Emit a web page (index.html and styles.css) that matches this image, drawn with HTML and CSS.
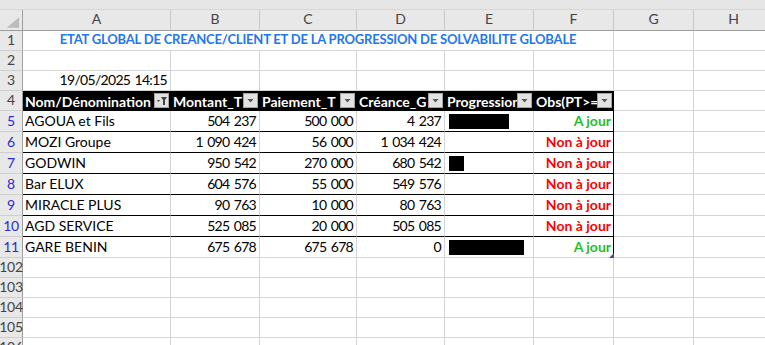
FILE: index.html
```html
<!DOCTYPE html>
<html lang="fr">
<head>
    <meta charset="UTF-8">
    <title>Etat global de créance</title>
    <link rel="stylesheet" href="styles.css">
</head>
<body>
    <div class="topbar"></div>

    <div class="sheet">
        <!-- en-têtes de colonnes -->
        <div class="corner">
            <svg width="23" height="21" viewBox="0 0 23 21"><polygon points="20,7 20,18 7,18" fill="#bcbcbc"/></svg>
        </div>
        <div class="ch">A</div>
        <div class="ch">B</div>
        <div class="ch">C</div>
        <div class="ch">D</div>
        <div class="ch">E</div>
        <div class="ch">F</div>
        <div class="ch">G</div>
        <div class="ch">H</div>

        <!-- ligne 1 : titre -->
        <div class="rh">1</div>
        <div class="c title">ETAT GLOBAL DE CREANCE/CLIENT ET DE LA PROGRESSION DE SOLVABILITE GLOBALE</div>
        <div class="c"></div>
        <div class="c"></div>

        <!-- ligne 2 -->
        <div class="rh">2</div>
        <div class="c"></div><div class="c"></div><div class="c"></div><div class="c"></div>
        <div class="c"></div><div class="c"></div><div class="c"></div><div class="c"></div>

        <!-- ligne 3 : date -->
        <div class="rh">3</div>
        <div class="c num">19/05/2025 14:15</div>
        <div class="c"></div><div class="c"></div><div class="c"></div>
        <div class="c"></div><div class="c"></div><div class="c"></div><div class="c"></div>

        <!-- ligne 4 : en-tête du tableau -->
        <div class="rh">4</div>
        <div class="c hd">
            <span class="label">Nom/Dénomination</span>
            <span class="filter">
                <svg width="13" height="13" viewBox="0 0 13 13">
                    <polygon points="2,6 5,6 3.5,8" fill="#444"/>
                    <polygon points="6,3 12,3 10,6 10,11 8,11 8,6" fill="#444"/>
                </svg>
            </span>
        </div>
        <div class="c hd">
            <span class="label">Montant_T</span>
            <span class="filter"><svg width="13" height="13" viewBox="0 0 13 13"><polygon points="3.5,5 9.5,5 6.5,8.5" fill="#555"/></svg></span>
        </div>
        <div class="c hd">
            <span class="label">Paiement_T</span>
            <span class="filter"><svg width="13" height="13" viewBox="0 0 13 13"><polygon points="3.5,5 9.5,5 6.5,8.5" fill="#555"/></svg></span>
        </div>
        <div class="c hd">
            <span class="label">Créance_G</span>
            <span class="filter"><svg width="13" height="13" viewBox="0 0 13 13"><polygon points="3.5,5 9.5,5 6.5,8.5" fill="#555"/></svg></span>
        </div>
        <div class="c hd">
            <span class="label">Progression</span>
            <span class="filter"><svg width="13" height="13" viewBox="0 0 13 13"><polygon points="3.5,5 9.5,5 6.5,8.5" fill="#555"/></svg></span>
        </div>
        <div class="c hd last">
            <span class="label">Obs(PT&gt;=1)</span>
            <span class="filter"><svg width="13" height="13" viewBox="0 0 13 13"><polygon points="3.5,5 9.5,5 6.5,8.5" fill="#555"/></svg></span>
        </div>
        <div class="c"></div>
        <div class="c"></div>

        <!-- lignes 5 à 11 : données -->
        <div class="rh blue">5</div>
        <div class="c row">AGOUA et Fils</div>
        <div class="c row num">504 237</div>
        <div class="c row num">500 000</div>
        <div class="c row num">4 237</div>
        <div class="c row prog"><span class="bar" style="width: 60px"></span></div>
        <div class="c row last right ok">A jour</div>
        <div class="c"></div>
        <div class="c"></div>

        <div class="rh blue">6</div>
        <div class="c row">MOZI Groupe</div>
        <div class="c row num">1 090 424</div>
        <div class="c row num">56 000</div>
        <div class="c row num">1 034 424</div>
        <div class="c row prog"></div>
        <div class="c row last right late">Non à jour</div>
        <div class="c"></div>
        <div class="c"></div>

        <div class="rh blue">7</div>
        <div class="c row">GODWIN</div>
        <div class="c row num">950 542</div>
        <div class="c row num">270 000</div>
        <div class="c row num">680 542</div>
        <div class="c row prog"><span class="bar" style="width: 15px"></span></div>
        <div class="c row last right late">Non à jour</div>
        <div class="c"></div>
        <div class="c"></div>

        <div class="rh blue">8</div>
        <div class="c row">Bar ELUX</div>
        <div class="c row num">604 576</div>
        <div class="c row num">55 000</div>
        <div class="c row num">549 576</div>
        <div class="c row prog"></div>
        <div class="c row last right late">Non à jour</div>
        <div class="c"></div>
        <div class="c"></div>

        <div class="rh blue">9</div>
        <div class="c row">MIRACLE PLUS</div>
        <div class="c row num">90 763</div>
        <div class="c row num">10 000</div>
        <div class="c row num">80 763</div>
        <div class="c row prog"></div>
        <div class="c row last right late">Non à jour</div>
        <div class="c"></div>
        <div class="c"></div>

        <div class="rh blue">10</div>
        <div class="c row">AGD SERVICE</div>
        <div class="c row num">525 085</div>
        <div class="c row num">20 000</div>
        <div class="c row num">505 085</div>
        <div class="c row prog"></div>
        <div class="c row last right late">Non à jour</div>
        <div class="c"></div>
        <div class="c"></div>

        <div class="rh blue">11</div>
        <div class="c">GARE BENIN</div>
        <div class="c num">675 678</div>
        <div class="c num">675 678</div>
        <div class="c num">0</div>
        <div class="c prog"><span class="bar" style="width: 75px"></span></div>
        <div class="c last right ok end">A jour<span class="handle"></span></div>
        <div class="c"></div>
        <div class="c"></div>

        <!-- lignes vides après le filtre -->
        <div class="rh">102</div>
        <div class="c"></div><div class="c"></div><div class="c"></div><div class="c"></div>
        <div class="c"></div><div class="c"></div><div class="c"></div><div class="c"></div>

        <div class="rh">103</div>
        <div class="c"></div><div class="c"></div><div class="c"></div><div class="c"></div>
        <div class="c"></div><div class="c"></div><div class="c"></div><div class="c"></div>

        <div class="rh">104</div>
        <div class="c"></div><div class="c"></div><div class="c"></div><div class="c"></div>
        <div class="c"></div><div class="c"></div><div class="c"></div><div class="c"></div>

        <div class="rh">105</div>
        <div class="c"></div><div class="c"></div><div class="c"></div><div class="c"></div>
        <div class="c"></div><div class="c"></div><div class="c"></div><div class="c"></div>

        <div class="rh">106</div>
        <div class="c"></div><div class="c"></div><div class="c"></div><div class="c"></div>
        <div class="c"></div><div class="c"></div><div class="c"></div><div class="c"></div>
    </div>
</body>
</html>
```

FILE: styles.css
```css
/* Feuille de calcul façon Excel */
body {
    margin: 0;
    background: #fff;
    overflow: hidden;
    font-family: Lato, "Open Sans", sans-serif;
    font-size: 14px;
    color: #000;
}

.topbar {
    height: 9px;
    background: #e6e6e6;
    border-bottom: 1px solid #d6d6d6;
}

.sheet {
    display: grid;
    grid-template-columns: 23px 148px 89px 97px 88px 89px 80px 80px 80px;
    grid-template-rows: 21px repeat(4, 20px) repeat(7, 21px) repeat(5, 20px);
    width: 774px;
}

.sheet > div {
    box-sizing: border-box;
    min-width: 0;
}

/* en-têtes */
.corner,
.ch,
.rh {
    background: #e8e8e8;
    color: #444;
    display: flex;
    justify-content: center;
    align-items: flex-end;
    line-height: 15px;
}

.corner {
    border-right: 1px solid #9e9e9e;
    border-bottom: 1px solid #9e9e9e;
    align-items: stretch;
}

.ch {
    border-right: 1px solid #c8c8c8;
    border-bottom: 1px solid #9e9e9e;
    padding-bottom: 4px;
}

.rh {
    border-right: 1px solid #9e9e9e;
    border-bottom: 1px solid #cfcfcf;
    padding-bottom: 3px;
    letter-spacing: -0.3px;
}

.rh.blue {
    color: #2b2bd4;
}

/* cellules */
.c {
    display: flex;
    align-items: flex-end;
    padding: 0 2px 3px;
    line-height: 15px;
    white-space: nowrap;
    overflow: hidden;
    border-right: 1px solid #d4d4d4;
    border-bottom: 1px solid #d4d4d4;
}

.num,
.right {
    justify-content: flex-end;
}

.num {
    letter-spacing: -0.7px;
    word-spacing: 1.4px;
    padding-right: 3px;
}

.title {
    grid-column: span 6;
    justify-content: center;
    font-size: 13px;
    letter-spacing: -0.2px;
    font-weight: bold;
    color: #2277ee;
    border-right: 1px solid #d4d4d4;
}

.hd {
    background: #000;
    color: #fff;
    font-weight: bold;
    border-right-color: #000;
    border-bottom-color: #000;
    align-items: center;
    padding: 0 1px 0 2px;
}

.hd .label {
    flex: 1;
    overflow: hidden;
    padding-top: 1px;
}

.filter {
    width: 15px;
    height: 15px;
    box-sizing: border-box;
    flex: none;
    display: flex;
    justify-content: center;
    align-items: center;
    background: #e2e2e2;
    border: 1px solid #a4a4a4;
}

.row {
    border-bottom-color: #000;
}

.last {
    border-right-color: #000;
}

.prog {
    padding: 0 2px 2px 4px;
}

.bar {
    display: block;
    height: 15px;
    background: #000;
}

.ok {
    color: #1fbf2a;
    font-weight: bold;
}

.late {
    color: #ff0000;
    font-weight: bold;
}

.end {
    position: relative;
    overflow: visible;
}

.handle {
    position: absolute;
    right: -1px;
    bottom: -1px;
    width: 5px;
    height: 5px;
    background: #3c4fa6;
    clip-path: polygon(100% 0, 100% 100%, 0 100%);
}
```
